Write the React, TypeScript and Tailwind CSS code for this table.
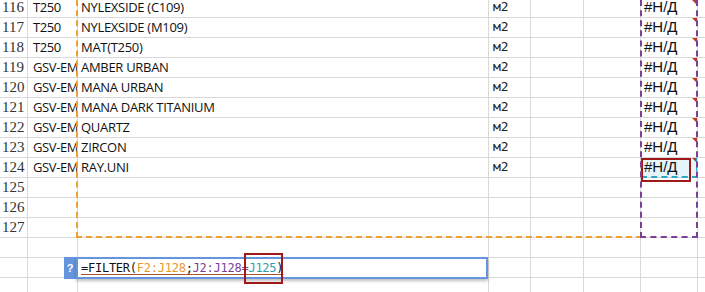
import React from 'react';

type Row = { n: number; b?: string; c?: string; d?: string; g?: string };

const rows: Row[] = [
  { n: 116, b: 'T250', c: 'NYLEXSIDE (C109)', d: 'м2', g: '#Н/Д' },
  { n: 117, b: 'T250', c: 'NYLEXSIDE (M109)', d: 'м2', g: '#Н/Д' },
  { n: 118, b: 'T250', c: 'MAT(T250)', d: 'м2', g: '#Н/Д' },
  { n: 119, b: 'GSV-EM', c: 'AMBER URBAN', d: 'м2', g: '#Н/Д' },
  { n: 120, b: 'GSV-EM', c: 'MANA URBAN', d: 'м2', g: '#Н/Д' },
  { n: 121, b: 'GSV-EM', c: 'MANA DARK TITANIUM', d: 'м2', g: '#Н/Д' },
  { n: 122, b: 'GSV-EM', c: 'QUARTZ', d: 'м2', g: '#Н/Д' },
  { n: 123, b: 'GSV-EM', c: 'ZIRCON', d: 'м2', g: '#Н/Д' },
  { n: 124, b: 'GSV-EM', c: 'RAY.UNI', d: 'м2', g: '#Н/Д' },
  { n: 125 },
  { n: 126 },
  { n: 127 },
  { n: 0 },
  { n: 0 },
  { n: 0 },
];

// base cell: right gridline, bottom-aligned text like Excel
const cell = 'border-r border-[#d9d9d9] h-full flex items-end pb-[4px] leading-[12px] overflow-x-clip whitespace-nowrap';

function SheetRow({ row, first }: { row: Row; first: boolean }) {
  const selected = row.n === 124;
  return (
    <div className={`flex border-b border-[#d9d9d9] ${first ? 'h-[18px]' : 'h-[20px]'}`}>
      <div className={`${cell} w-[28px] pl-[2px] text-[15px] text-[#333] [font-family:'Liberation_Serif',serif]`}>
        {row.n ? row.n : ''}
      </div>
      <div className={`${cell} w-[50px] pl-[5px] text-[13px] text-[#111] [font-family:'Open_Sans',sans-serif] tracking-[-0.4px]`}>
        {row.b}
      </div>
      <div className={`${cell} w-[411px] pl-[3px] text-[13px] text-[#111] [font-family:'Open_Sans',sans-serif] tracking-[-0.3px]`}>
        {row.c}
      </div>
      <div className={`${cell} w-[42px] pl-[4px] text-[13px] text-[#222] [font-family:'DejaVu_Sans_Mono',monospace]`}>
        {row.d}
      </div>
      <div className={`${cell} w-[53px]`} />
      <div className={`${cell} w-[57px]`} />
      <div
        className={`${cell} relative w-[57px] pl-[3px] text-[15px] text-[#111] [font-family:'Liberation_Sans',sans-serif] ${
          selected ? 'bg-[#e6f5f9]' : ''
        }`}
      >
        {row.g}
        {row.g && (
          <span className="absolute right-0 top-0 h-0 w-0 border-l-[5px] border-t-[5px] border-l-transparent border-t-[#c0392b]" />
        )}
        {selected && (
          <>
            <span className="absolute left-0 right-[-1px] bottom-[-1px] border-b-2 border-dashed border-[#2aa7c0]" />
            <span className="absolute top-0 bottom-[-1px] right-[-1px] border-r-2 border-dashed border-[#2aa7c0]" />
            <span className="absolute left-0 top-0 w-[50px] h-[24px] border-2 border-[#a01818]" />
          </>
        )}
      </div>
      <div className="flex-1 h-full" />
    </div>
  );
}

export default function App() {
  return (
    <div className="relative w-[705px] h-[292px] overflow-hidden bg-white select-none">
      <div className="flex flex-col">
        {rows.map((r, i) => (
          <SheetRow key={i} row={r} first={i === 0} />
        ))}
      </div>

      {/* copy ranges (marching ants) */}
      <div className="absolute left-[76px] top-[-10px] w-[566px] h-[248px] border-l-2 border-b-2 border-dashed border-[#f0a030]" />
      <div className="absolute left-[640px] top-[-10px] w-[58px] h-[248px] border-l-2 border-r-2 border-b-2 border-dashed border-[#7b3f98]" />

      {/* formula edit box */}
      <div className="absolute left-[64px] top-[257px] flex h-[22px]">
        <div className="w-[12px] h-full bg-[#6495dd] text-white text-[11px] font-bold flex items-center justify-center [font-family:'Liberation_Sans',sans-serif]">
          ?
        </div>
        <div className="w-[412px] h-full border-2 border-[#6495dd] bg-white shadow-[0_2px_3px_rgba(0,0,0,0.25)] flex items-center pl-[3px]">
          <span className="relative text-[12px] leading-none tracking-[-0.25px] [font-family:'DejaVu_Sans_Mono',monospace] underline decoration-[#a0522d] underline-offset-[2px]">
            <span className="text-[#111]">=FILTER(</span>
            <span className="text-[#e59a2a]">F2:J128</span>
            <span className="text-[#111]">;</span>
            <span className="text-[#7b3f98]">J2:J128=</span>
            <span className="relative text-[#2e9fb0]">
              J125
              <span className="absolute left-[-4px] right-[-7px] top-[-8px] bottom-[-9px] border-2 border-[#a01818]" />
            </span>
            <span className="text-[#111]">)</span>
          </span>
        </div>
      </div>
    </div>
  );
}
